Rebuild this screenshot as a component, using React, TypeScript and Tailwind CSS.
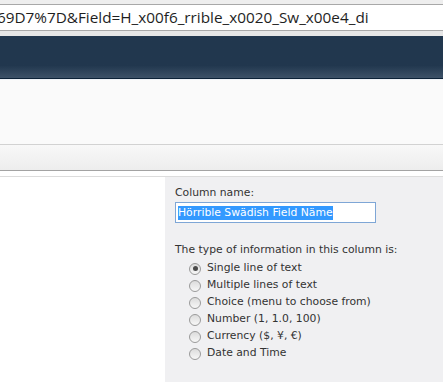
import React from 'react';

const options = [
  'Single line of text',
  'Multiple lines of text',
  'Choice (menu to choose from)',
  'Number (1, 1.0, 100)',
  'Currency ($, ¥, €)',
  'Date and Time',
];

const Radio: React.FC<{ checked?: boolean }> = ({ checked }) => (
  <span className="flex h-[12px] w-[12px] items-center justify-center rounded-full border border-[#9a9a9a] bg-gradient-to-b from-[#dcdcdc] to-[#f7f7f7]">
    {checked && <span className="h-[5px] w-[5px] rounded-full bg-[#4a4a4a]" />}
  </span>
);

const App: React.FC = () => {
  return (
    <div className="flex h-[382px] w-[443px] flex-col overflow-hidden bg-white font-['DejaVu_Sans',sans-serif]">
      {/* Address bar */}
      <div className="h-[4px] bg-[#eeeeee]" />
      <div className="flex h-[27px] items-center overflow-hidden whitespace-nowrap border-y border-[#a8a8a8] bg-white font-['Open_Sans',sans-serif] text-[15.3px] text-[#1e1e1e]">
        <span className="-ml-[3px]">69D7%7D&amp;Field=H_x00f6_rrible_x0020_Sw_x00e4_di</span>
      </div>
      <div className="h-[5px] bg-[#e6e6e6]" />

      {/* Dark ribbon band */}
      <div className="h-[43px] border-b border-[#0c2238] bg-gradient-to-b from-[#21374e] from-70% to-[#3d5268]" />

      {/* Title area */}
      <div className="h-[66px] border-t border-[#eef3f8] border-b border-b-[#d2d2d2] bg-[#fafafa]" />
      <div className="h-[26px] border-b border-[#a3a3a3] bg-gradient-to-b from-[#f8f8f8] to-[#ededed]" />
      <div className="h-[6px] border-b border-[#dcdcdc] bg-white" />

      {/* Body */}
      <div className="flex flex-1">
        <div className="w-[165px] bg-white" />
        <div className="flex-1 bg-[#f0f0f2] pl-[10px] pt-[9px] text-[10.8px] text-[#333333]">
          <div className="leading-[14px]">Column name:</div>
          <div className="mt-[2px] flex h-[21px] w-[201px] items-center border border-[#7ea6d6] bg-white px-[2px]">
            <span className="bg-[#3399ff] leading-[14px] text-white">Hörrible Swädish Field Näme</span>
          </div>
          <div className="mt-[20px] leading-[14px]">The type of information in this column is:</div>
          <div className="mt-[3px] flex flex-col pl-[14px]">
            {options.map((o, i) => (
              <div key={o} className="flex h-[17px] items-center gap-[6px]">
                <Radio checked={i === 0} />
                <span>{o}</span>
              </div>
            ))}
          </div>
        </div>
      </div>
    </div>
  );
};

export default App;
